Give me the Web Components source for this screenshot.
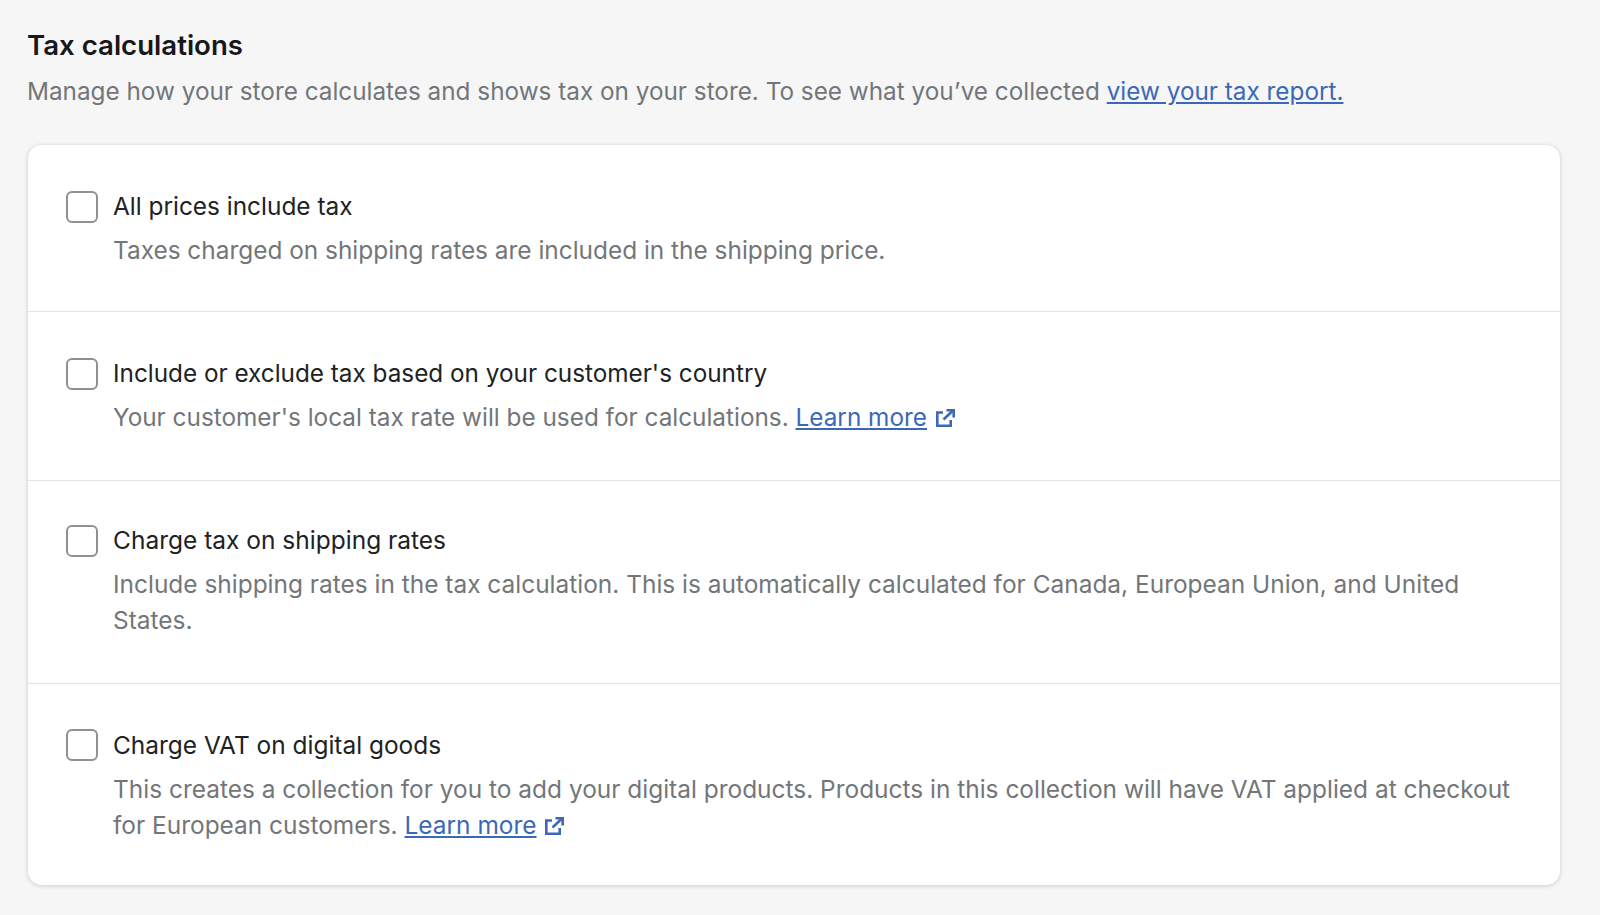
<!DOCTYPE html>
<html>
<head>
<meta charset="utf-8">
<title>Tax calculations</title>
<style>
  html, body { margin: 0; background: #f6f6f7; }
  body { font-family: Inter, "Liberation Sans", sans-serif; }
</style>
</head>
<body>
<tax-page>
  <span slot="title">Tax calculations</span>
  <span slot="intro">Manage how your store calculates and shows tax on your store. To see what you’ve collected <a href="#" style="color:#3b69b8;text-decoration:underline">view your tax report.</a></span>
  <tax-option style="--top:43px;--bottom:43px;--label:24.4px" label="All prices include tax">Taxes charged on shipping rates are included in the shipping price.</tax-option>
  <tax-option style="--top:43px;--bottom:44.5px;--help:24.33px" label="Include or exclude tax based on your customer's country">Your customer's local tax rate will be used for calculations. <learn-more></learn-more></tax-option>
  <tax-option style="--top:41.5px;--bottom:44.5px;--help:24.45px;--label:24.5px" label="Charge tax on shipping rates">Include shipping rates in the tax calculation. This is automatically calculated for Canada, European Union, and United States.</tax-option>
  <tax-option style="--top:43px;--bottom:42px;--help:24.45px;--label:24.45px" label="Charge VAT on digital goods">This creates a collection for you to add your digital products. Products in this collection will have VAT applied at checkout for European customers. <learn-more></learn-more></tax-option>
</tax-page>
<script>
class TaxPage extends HTMLElement {
  connectedCallback() {
    this.attachShadow({ mode: 'open' });
    this.shadowRoot.innerHTML = `
      <style>
        :host { display: block; padding: 28px 40px 29px 28px; }
        h2 {
          margin: 0 0 0 -1px;
          font-size: 27.6px;
          line-height: 34px;
          font-weight: 600;
          color: #16181b;
        }
        p {
          margin: 11px 0 0 -1px;
          font-size: 24.3px;
          line-height: 36px;
          color: #737679;
        }
        .card {
          margin-top: 36px;
          background: #fff;
          border-radius: 14px;
          box-shadow: 0 1px 4px rgba(23, 24, 24, 0.14), 0 0 6px rgba(23, 24, 24, 0.05);
        }
      </style>
      <h2><slot name="title"></slot></h2>
      <p><slot name="intro"></slot></p>
      <div class="card"><slot></slot></div>
    `;
  }
}
customElements.define('tax-page', TaxPage);

class TaxOption extends HTMLElement {
  connectedCallback() {
    this.attachShadow({ mode: 'open' });
    this.shadowRoot.innerHTML = `
      <style>
        :host {
          display: grid;
          grid-template-columns: 33px 1fr;
          column-gap: 14px;
          padding: var(--top) 40px var(--bottom) 38px;
          border-bottom: 1.5px solid #e1e3e5;
        }
        :host(:last-child) { border-bottom: 0; }
        .box {
          width: 28px;
          height: 28px;
          margin-top: 2.5px;
          border: 2px solid #8c9196;
          border-radius: 6px;
          background: #fff;
        }
        .label {
          font-size: var(--label, 24.3px);
          line-height: 36px;
          color: #202223;
        }
        .help {
          margin-top: 8px;
          font-size: var(--help, 24.4px);
          line-height: 36px;
          color: #737679;
        }
      </style>
      <div class="box"></div>
      <div class="label">${this.getAttribute('label')}</div>
      <div></div>
      <div class="help"><slot></slot></div>
    `;
  }
}
customElements.define('tax-option', TaxOption);

class LearnMore extends HTMLElement {
  connectedCallback() {
    this.attachShadow({ mode: 'open' });
    this.shadowRoot.innerHTML = `
      <style>
        :host { display: inline; color: #3b69b8; }
        a { color: inherit; text-decoration: underline; }
        svg { width: 19px; height: 18px; margin-left: 2px; vertical-align: -1px; }
      </style>
      <a href="#">Learn more</a>
      <svg viewBox="0 0 19 18" fill="none" stroke="currentColor" stroke-width="2.6">
        <path d="M7 3.5H1.3v13.2h13.4V11"/>
        <path d="M7.5 10.5 17 1.5"/>
        <path d="M10.5 1.3h7.2v7.2"/>
      </svg>
    `;
  }
}
customElements.define('learn-more', LearnMore);
</script>
</body>
</html>
